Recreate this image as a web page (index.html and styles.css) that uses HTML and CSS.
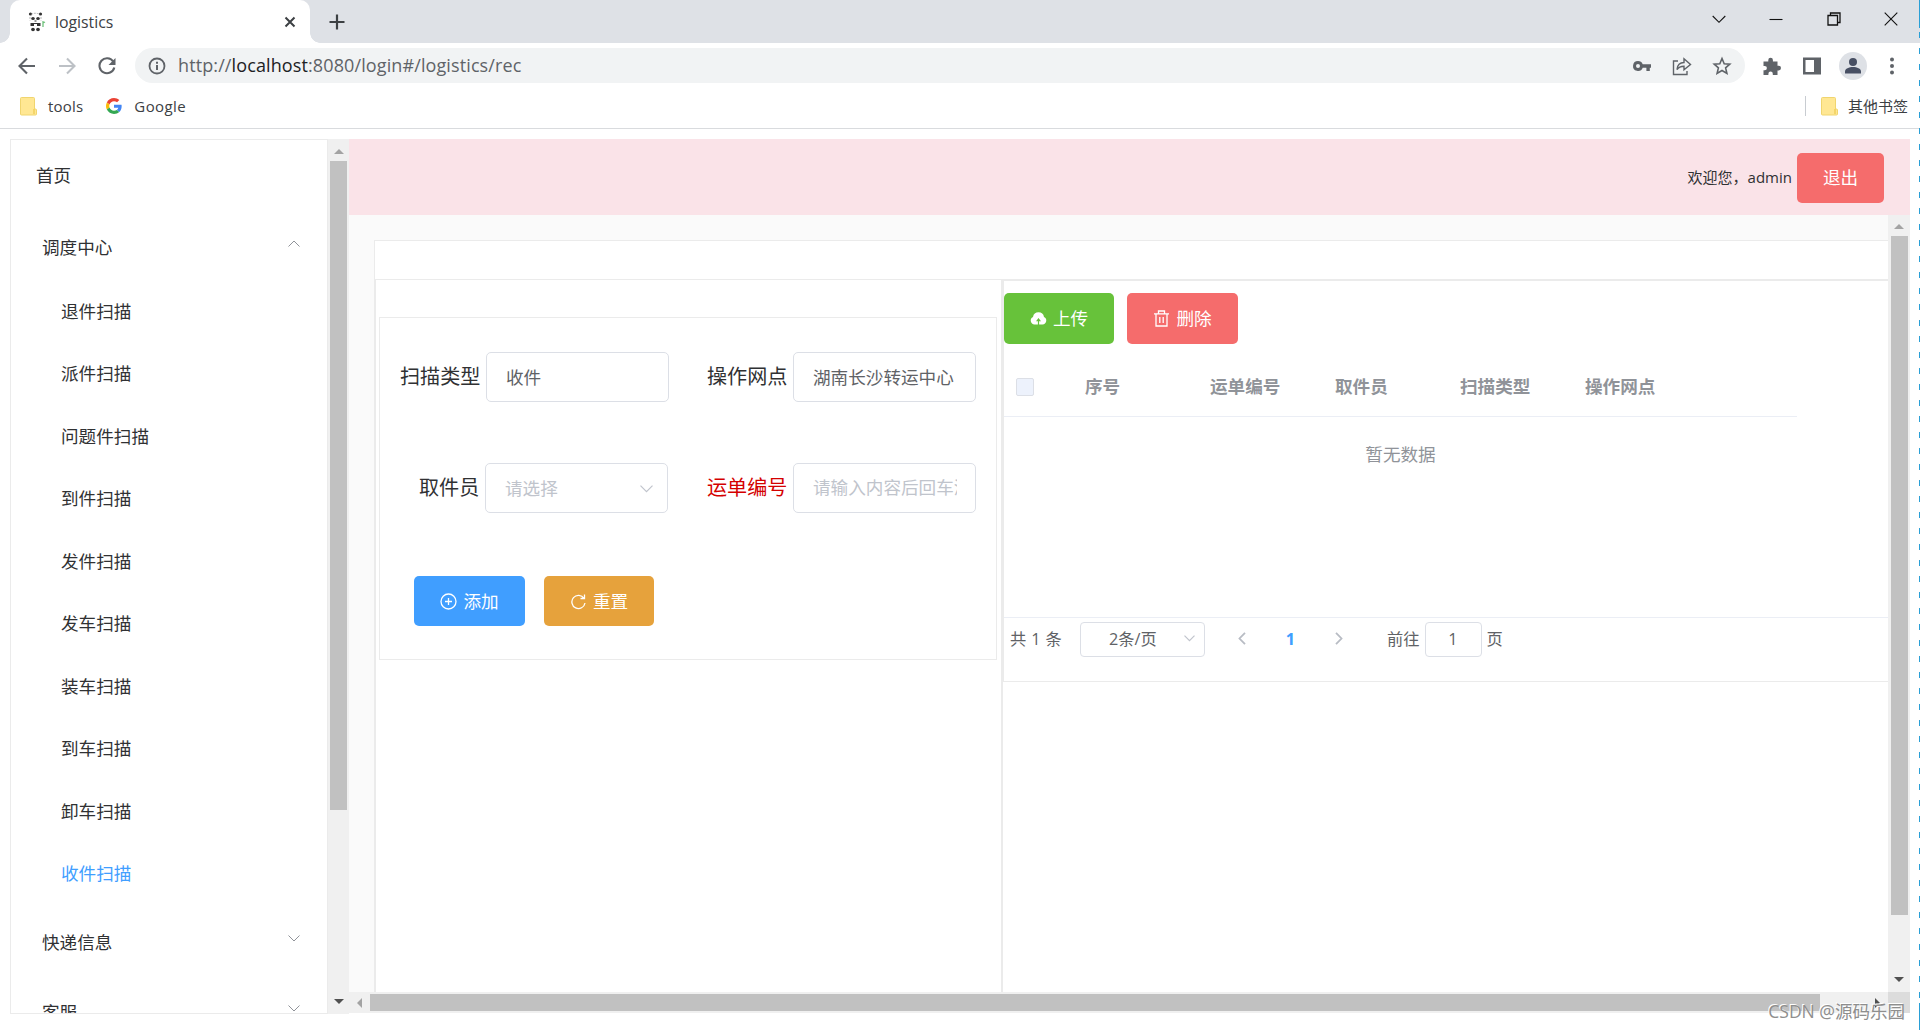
FILE: index.html
```html
<!DOCTYPE html>
<html lang="zh-CN">
  <head>
    <meta charset="UTF-8" />
    <meta name="viewport" content="width=device-width, initial-scale=1.0" />
    <title>logistics</title>
    <link rel="stylesheet" href="styles.css">
  </head>
  <body>
    <!-- Tab strip -->
    <div class="tabs">
      <div class="tab">
        <svg class="favicon" width="18" height="20" viewBox="0 0 18 20">
          <g fill="#333">
            <circle cx="2.5" cy="2" r="1.6" />
            <circle cx="12.5" cy="2" r="1.6" />
            <ellipse cx="5" cy="6.5" rx="1.8" ry="1.5" />
            <ellipse cx="10" cy="6.5" rx="1.8" ry="1.5" />
            <rect x="6.5" y="8.5" width="2" height="1" />
            <rect x="2.5" y="11" width="3.5" height="3" />
            <rect x="9" y="11" width="3.5" height="3" />
            <rect x="6" y="11" width="3" height="1" />
            <ellipse cx="5" cy="17.5" rx="1.9" ry="1.8" />
            <ellipse cx="10" cy="17.5" rx="1.9" ry="1.8" />
          </g>
          <path d="M3 2.5Q7.500 0 12 2.500M2 5V8.500M13 5V8.500" stroke="#999" stroke-width=".7" fill="none" stroke-dasharray="2 1" />
          <path d="M15 9v6M15 11l2-1" stroke="#6fc27c" stroke-width="1.3" fill="none" />
        </svg>
        <span class="tab-title">logistics</span>
        <svg class="tab-close" width="12" height="12" viewBox="0 0 12 12"><path d="M1.500 1.500l9 9M10.500 1.500l-9 9" stroke="#3c4043" stroke-width="2" /></svg>
      </div>
      <svg class="tab-add" width="16" height="16" viewBox="0 0 16 16"><path d="M8 .5v15M.5 8h15" stroke="#3c4043" stroke-width="2.200" /></svg>
      <div class="window-buttons">
        <svg width="14" height="14" viewBox="0 0 14 14"><path d="M.7 4l6.300 6.300L13.300 4" /></svg>
        <svg width="14" height="14" viewBox="0 0 14 14"><path d="M.5 7.500h13" /></svg>
        <svg width="14" height="14" viewBox="0 0 14 14"><path d="M1 3.500h9.500V13H1zM3.500 3.500V1H13v9.500h-2.500" stroke-width="1.300" /></svg>
        <svg width="14" height="14" viewBox="0 0 14 14"><path d="M.7.7l12.600 12.600M13.300.7L.7 13.300" /></svg>
      </div>
    </div>

    <!-- Address bar -->
    <div class="toolbar">
      <div class="nav">
        <svg width="18" height="18" viewBox="0 0 18 18" stroke="#5f6368"><path d="M17 9H2M9 1.500L1.500 9 9 16.500" /></svg>
        <svg width="18" height="18" viewBox="0 0 18 18" stroke="#bdc1c6"><path d="M1 9h15M9 1.500L16.500 9 9 16.500" /></svg>
        <svg width="18" height="18" viewBox="0 0 18 18" stroke="#5f6368"><path d="M15.200 4.500A7.500 7.500 0 1 0 16.300 10.500" /><path d="M17.500 1v7h-7z" fill="#5f6368" stroke="none" /></svg>
      </div>
      <div class="address">
        <svg width="18" height="18" viewBox="0 0 18 18"><circle cx="9" cy="9" r="7.500" fill="none" stroke="#5f6368" stroke-width="1.800" /><path d="M9 8v5M9 4.800v1.900" stroke="#5f6368" stroke-width="2" /></svg>
        <div class="url">http://<b>localhost</b>:8080/login#/logistics/rec</div>
        <div class="address-icons">
          <svg width="20" height="20" viewBox="0 0 20 20"><path fill="#5f6368" fill-rule="evenodd" d="M6 5a5 5 0 0 1 4.700 3.200H19v3.600h-1.200V15h-3.400v-3.200h-3.700A5 5 0 1 1 6 5zm0 3a2 2 0 1 0 0 4 2 2 0 0 0 0-4z" /></svg>
          <svg width="20" height="20" viewBox="0 0 20 20"><path d="M6 5H1.500v13.500H15V15M5 13.500c.5-5 3-7 7-7V2.800l6.500 5.700-6.500 5.300v-3.600c-3.500 0-5.500 1-7 3.300z" fill="none" stroke="#5f6368" stroke-width="1.400" /></svg>
          <svg width="20" height="20" viewBox="0 0 20 20"><path d="M10 2.500l2.200 5.200 5.600.5-4.200 3.700 1.300 5.500L10 14.500l-4.900 2.900 1.300-5.500-4.200-3.700 5.600-.5z" fill="none" stroke="#5f6368" stroke-width="1.600" /></svg>
        </div>
      </div>
      <div class="extensions">
        <svg width="20" height="20" viewBox="0 0 20 20"><path fill="#5f6368" d="M1.500 5.500h4.800V4a2.300 2.300 0 0 1 4.600 0v1.500h4.600v4.300h1.200a2.300 2.300 0 0 1 0 4.600h-1.200V19h-4.700v-1.300a2.200 2.200 0 0 0-4.400 0V19H1.500v-4.700h1.200a2.200 2.200 0 0 0 0-4.400H1.500z" /></svg>
        <svg width="20" height="20" viewBox="0 0 20 20"><path fill="#5f6368" fill-rule="evenodd" d="M1 1.500h18v17H1zM3.500 4v12H12V4z" /></svg>
        <svg width="28" height="28" viewBox="0 0 28 28"><circle cx="14" cy="14" r="14" fill="#dee1e6" /><circle cx="14" cy="10" r="4" fill="#474f63" /><path fill="#474f63" d="M6 21.500v-2c0-3 4-4.500 8-4.500s8 1.500 8 4.500v2z" /></svg>
        <svg class="dots" width="6" height="20" viewBox="0 0 6 20" fill="#5f6368"><circle cx="3" cy="3.500" r="2" /><circle cx="3" cy="10" r="2" /><circle cx="3" cy="16.500" r="2" /></svg>
      </div>
    </div>

    <!-- Bookmarks -->
    <div class="bookmarks">
      <svg class="folder" width="17" height="19" viewBox="0 0 17 19"><path d="M1.500.5h12a1 1 0 0 1 1 1V12h1a1 1 0 0 1 1 1v4a1 1 0 0 1-1 1h-14a1 1 0 0 1-1-1V1.500a1 1 0 0 1 1-1z" fill="#ffe793" stroke="#f0d56f" /><path d="M14 12v5" stroke="#e9c340" /></svg>
      <span class="bookmark-tools">tools</span>
      <svg class="google" width="16" height="16" viewBox="0 0 48 48">
        <path fill="#EA4335" d="M24 9.500c3.540 0 6.710 1.220 9.210 3.600l6.850-6.850C35.900 2.380 30.470 0 24 0 14.620 0 6.510 5.380 2.560 13.220l7.980 6.190C12.430 13.720 17.740 9.500 24 9.500z" />
        <path fill="#4285F4" d="M46.980 24.550c0-1.570-.15-3.090-.38-4.550H24v9.020h12.940c-.58 2.960-2.260 5.480-4.780 7.180l7.730 6c4.510-4.180 7.090-10.360 7.090-17.650z" />
        <path fill="#FBBC05" d="M10.530 28.590c-.48-1.450-.76-2.990-.76-4.590s.27-3.140.76-4.590l-7.980-6.190C.92 16.460 0 20.120 0 24c0 3.880.92 7.540 2.560 10.780l7.970-6.190z" />
        <path fill="#34A853" d="M24 48c6.480 0 11.930-2.130 15.890-5.810l-7.730-6c-2.150 1.450-4.920 2.300-8.160 2.300-6.260 0-11.570-4.220-13.470-9.910l-7.980 6.190C6.510 42.620 14.620 48 24 48z" />
      </svg>
      <span class="bookmark-google">Google</span>
      <div class="other-bookmarks">
        <svg class="folder" width="17" height="19" viewBox="0 0 17 19"><path d="M1.500.5h12a1 1 0 0 1 1 1V12h1a1 1 0 0 1 1 1v4a1 1 0 0 1-1 1h-14a1 1 0 0 1-1-1V1.500a1 1 0 0 1 1-1z" fill="#ffe793" stroke="#f0d56f" /><path d="M14 12v5" stroke="#e9c340" /></svg>
        <span>其他书签</span>
      </div>
    </div>

    <div class="app">
      <div class="aside">
        <ul class="menu">
          <li class="home">首页</li>
          <li class="submenu">调度中心
            <svg class="arrow" width="12" height="7" viewBox="0 0 12 7"><path d="M.5 6.500L6 1l5.500 5.500" /></svg>
          </li>
          <li class="item">退件扫描</li>
          <li class="item">派件扫描</li>
          <li class="item">问题件扫描</li>
          <li class="item">到件扫描</li>
          <li class="item">发件扫描</li>
          <li class="item">发车扫描</li>
          <li class="item">装车扫描</li>
          <li class="item">到车扫描</li>
          <li class="item">卸车扫描</li>
          <li class="item active">收件扫描</li>
          <li class="submenu">快递信息
            <svg class="arrow" width="12" height="7" viewBox="0 0 12 7"><path d="M.5.5L6 6 11.500.5" /></svg>
          </li>
          <li class="submenu">客服
            <svg class="arrow" width="12" height="7" viewBox="0 0 12 7"><path d="M.5.5L6 6 11.500.5" /></svg>
          </li>
        </ul>
      </div>
      <div class="scroll-y">
        <i class="up"></i>
        <div class="thumb thumb-aside"></div>
        <i class="down"></i>
      </div>

      <div class="container">
        <div class="header">
          <span>欢迎您，admin</span>
          <button class="btn danger logout">退出</button>
        </div>
        <div class="body">
          <div class="main">
            <div class="card">
              <div class="columns">
                <div class="left">
                  <form class="scan-form">
                    <div class="row">
                      <label class="first">扫描类型</label>
                      <input type="text" value="收件" readonly />
                      <label class="second">操作网点</label>
                      <input type="text" value="湖南长沙转运中心" readonly />
                    </div>
                    <div class="row">
                      <label class="first picker">取件员</label>
                      <div class="select">
                        请选择
                        <svg width="13" height="8" viewBox="0 0 13 8"><path d="M.5.7l6 6 6-6" /></svg>
                      </div>
                      <label class="second required">运单编号</label>
                      <input type="text" placeholder="请输入内容后回车添加" />
                    </div>
                    <div class="actions">
                      <button type="button" class="btn primary">
                        <svg width="17" height="17" viewBox="0 0 17 17"><circle cx="8.500" cy="8.500" r="7.500" /><path d="M8.500 5v7M5 8.500h7" /></svg><span>添加</span>
                      </button>
                      <button type="button" class="btn warning">
                        <svg width="17" height="17" viewBox="0 0 17 17"><path d="M14 5.300A6.600 6.600 0 1 0 15 10M14.500 1.500v4h-4" /></svg><span>重置</span>
                      </button>
                    </div>
                  </form>
                </div>
                <div class="right">
                  <div class="panel">
                    <div class="table-actions">
                      <button class="btn success">
                        <svg width="17" height="17" viewBox="0 0 17 17"><path fill="#fff" stroke="none" d="M4.500 14.500A4 4 0 0 1 3 6.900a5.600 5.600 0 0 1 11 0 4 4 0 0 1-1.500 7.600H9.100v-3.300h1.900L8.500 8 6 11.200h1.900v3.300z" /></svg><span>上传</span>
                      </button>
                      <button class="btn danger">
                        <svg width="17" height="17" viewBox="0 0 17 17"><path d="M1 3.800h15M5.500 3.500V1h6v2.500M3 4v12h11V4M6.800 7v6M10.200 7v6" /></svg><span>删除</span>
                      </button>
                    </div>
                    <table>
                      <thead>
                        <tr>
                          <th class="check"><span class="checkbox"></span></th>
                          <th>序号</th>
                          <th>运单编号</th>
                          <th>取件员</th>
                          <th>扫描类型</th>
                          <th class="last">操作网点</th>
                        </tr>
                      </thead>
                      <tbody>
                        <tr>
                          <td colspan="6">暂无数据</td>
                        </tr>
                      </tbody>
                    </table>
                    <div class="pagination">
                      <span class="total">共 1 条</span>
                      <div class="page-size">2条/页
                        <svg width="11" height="7" viewBox="0 0 11 7"><path d="M.5.7l5 5 5-5" /></svg>
                      </div>
                      <div class="pager">
                        <svg width="8" height="13" viewBox="0 0 8 13"><path d="M7 .8L1.500 6.500 7 12.200" /></svg>
                        <b>1</b>
                        <svg width="8" height="13" viewBox="0 0 8 13"><path d="M1 .8l5.500 5.700L1 12.200" /></svg>
                      </div>
                      <span>前往</span>
                      <div class="jump">1</div>
                      <span>页</span>
                    </div>
                  </div>
                </div>
              </div>
            </div>
          </div>
          <div class="scroll-y">
            <i class="up"></i>
            <div class="thumb thumb-main"></div>
            <i class="down"></i>
          </div>
        </div>
        <div class="scroll-x">
          <i class="prev"></i>
          <div class="thumb"></div>
          <i class="next"></i>
          <div class="corner"></div>
        </div>
      </div>
    </div>

    <div class="edge"></div>
    <div class="watermark">CSDN @源码乐园</div>
  </body>
</html>
```
FILE: styles.css
```css
* {
  box-sizing: border-box;
}
body {
  margin: 0;
  height: 1030px;
  overflow: hidden;
  position: relative;
  display: flex;
  flex-direction: column;
  background-color: #fff;
  color: #303133;
  font-family: "Open Sans", "Noto Sans CJK SC", sans-serif;
  font-size: 17.6px;
}
svg {
  display: block;
  flex: none;
}

/* Browser frame */
.tabs {
  height: 43px;
  flex: none;
  display: flex;
  align-items: center;
  background-color: #dee1e6;
}
.tab {
  position: relative;
  width: 300px;
  height: 43px;
  margin-left: 10px;
  padding: 0 14px 0 18px;
  display: flex;
  align-items: center;
  background-color: #fff;
  border-radius: 10px 10px 0 0;
}
.tab::before,
.tab::after {
  content: "";
  position: absolute;
  bottom: 0;
  width: 10px;
  height: 10px;
}
.tab::before {
  left: -10px;
  background: radial-gradient(circle at 0 0, #dee1e6 9.5px, #fff 10px);
}
.tab::after {
  right: -10px;
  background: radial-gradient(circle at 100% 0, #dee1e6 9.5px, #fff 10px);
}
.tab-title {
  margin-left: 9px;
  font-size: 15.8px;
  color: #3c4043;
  padding-top: 1px;
}
.tab-close {
  margin-left: auto;
}
.tab-add {
  margin-left: 19px;
}
.window-buttons {
  margin-left: auto;
  padding-right: 22px;
  display: flex;
  gap: 43.5px;
  padding-bottom: 6px;
}
.window-buttons svg {
  fill: none;
  stroke: #111;
  stroke-width: 1.1;
}
.toolbar {
  height: 45px;
  flex: none;
  display: flex;
  align-items: center;
}
.nav {
  width: 135px;
  padding-left: 18px;
  display: flex;
  gap: 22px;
}
.nav svg {
  fill: none;
  stroke-width: 2.1;
}
.address {
  width: 1610px;
  height: 35px;
  padding: 0 13px 0 13px;
  display: flex;
  align-items: center;
  background-color: #f1f3f4;
  border-radius: 18px;
}
.url {
  margin-left: 12px;
  padding-bottom: 2px;
  font-size: 18px;
  letter-spacing: 0.11px;
  color: #5f6368;
}
.url b {
  font-weight: normal;
  color: #202124;
}
.address-icons {
  margin-left: auto;
  display: flex;
  gap: 20px;
}
.extensions {
  margin-left: 17px;
  display: flex;
  align-items: center;
  gap: 20px;
}
.extensions svg:nth-child(3) {
  margin-left: -3px;
}
.dots {
  margin-left: 2px;
}
.bookmarks {
  height: 41px;
  flex: none;
  display: flex;
  align-items: center;
  padding: 0 12px 4px 20px;
  font-size: 15px;
  color: #3c4043;
  border-bottom: 1px solid #d9dbde;
}
.bookmark-tools {
  margin-left: 11px;
  letter-spacing: 0.2px;
}
.bookmark-google {
  letter-spacing: 0.4px;
}
.google {
  margin: 0 12px 0 23px;
}
.other-bookmarks {
  margin-left: auto;
  height: 20px;
  padding-left: 15px;
  display: flex;
  align-items: center;
  gap: 10px;
  border-left: 1px solid #c8ccd1;
}
.other-bookmarks span {
  padding-bottom: 2px;
}

/* Page */
.app {
  width: 1900px;
  height: 875px;
  margin: 10px 0 0 10px;
  flex: none;
  display: flex;
}
.aside {
  width: 318px;
  height: 875px;
  overflow: hidden;
  border: 1px solid #ebebeb;
}
.menu {
  margin: 0;
  padding: 0;
  list-style: none;
}
.menu li {
  height: 62.5px;
  display: flex;
  align-items: center;
}
.menu .home {
  height: 70px;
  padding: 0 0 2px 25px;
}
.menu .submenu {
  height: 70px;
  padding: 2px 0 0 31px;
}
.menu .item {
  padding: 0 0 2px 50px;
}
.menu .active {
  color: #409eff;
}
.arrow {
  margin: -6px 27px 0 auto;
  fill: none;
  stroke: #909399;
}
.scroll-y {
  width: 21px;
  flex: none;
  display: flex;
  flex-direction: column;
  align-items: center;
  background-color: #f0f0f0;
}
.thumb {
  width: 17px;
  background-color: #c1c1c1;
}
.thumb-aside {
  height: 649px;
}
.thumb-main {
  height: 679px;
}
.up {
  margin: 10px 0 7px;
  border: 5px solid transparent;
  border-top: 0;
  border-bottom-color: #a3a3a3;
}
.down {
  margin: auto 0 10px;
  border: 5px solid transparent;
  border-bottom: 0;
  border-top-color: #505050;
}
.container {
  width: 1561px;
  display: flex;
  flex-direction: column;
}
.header {
  height: 76px;
  flex: none;
  display: flex;
  align-items: center;
  justify-content: flex-end;
  gap: 5px;
  padding: 2px 26px 0 0;
  background-color: #fae3e8;
  font-size: 15px;
}
.header span {
  padding-bottom: 3px;
}
.body {
  height: 777px;
  display: flex;
}
.main {
  width: 1539px;
  padding: 25px 0 0 25px;
  background-color: #fafafa;
  overflow: hidden;
}
.body .scroll-y {
  width: 22px;
}
.body .up {
  margin-top: 9px;
}
.card {
  height: 760px;
  padding-top: 38px;
  background-color: #fff;
  border: 1px solid #ebebeb;
  border-right: 0;
}
.columns {
  height: 720px;
  display: flex;
}
.left {
  width: 627px;
  border: 1px solid #ebebeb;
  border-bottom: 0;
  padding: 37px 0 0 3px;
}
.scan-form {
  width: 618px;
  height: 343px;
  padding-top: 34px;
  border: 1px solid #ebebeb;
}
.row {
  height: 50px;
  margin-bottom: 61px;
  display: flex;
  align-items: center;
}
label {
  padding-bottom: 3px;
  font-size: 20.1px;
  white-space: nowrap;
}
label.first {
  width: 106px;
  padding-left: 20px;
}
label.picker {
  width: 105px;
  padding-left: 39px;
}
label.second {
  width: 124px;
  padding-left: 38px;
}
.picker + .select + label.second {
  width: 125px;
  padding-left: 39px;
}
.required {
  color: #d40000;
}
.row input,
.select {
  width: 183px;
  height: 50px;
  padding: 0 18px 2px 19px;
  border: 1px solid #dcdfe6;
  border-radius: 5px;
  background-color: #fff;
  color: #606266;
  font-family: inherit;
  font-size: 17.6px;
}
.row input::placeholder {
  color: #c0c4cc;
}
.select {
  display: flex;
  align-items: center;
  justify-content: space-between;
  padding-right: 14px;
  color: #c0c4cc;
}
.select svg,
.page-size svg {
  fill: none;
  stroke: #c0c4cc;
  stroke-width: 1.2;
}
.select svg {
  margin-top: 3px;
}
.actions {
  display: flex;
  gap: 19px;
  margin: 2px 0 0 34px;
  padding-top: 2px;
}
.btn {
  height: 50px;
  width: 111px;
  padding: 0;
  display: flex;
  align-items: center;
  justify-content: center;
  gap: 6px;
  border: none;
  border-radius: 5px;
  color: #fff;
  font-family: inherit;
  font-size: 17.6px;
}
.btn span {
  padding-bottom: 2px;
}
.btn svg {
  fill: none;
  stroke: #fff;
  stroke-width: 1.3;
}
.logout {
  width: 87px;
  padding-bottom: 3px;
}
.primary {
  background-color: #409eff;
}
.warning {
  background-color: #e6a23c;
  width: 110px;
}
.success {
  background-color: #67c23a;
  width: 110px;
}
.danger {
  background-color: #f56c6c;
}
.right {
  flex: 1;
  border-left: 1px solid #ebebeb;
  border-top: 1px solid #ebebeb;
}
.panel {
  height: 402px;
  border: 1px solid #ebebeb;
  border-right: 0;
}
.table-actions {
  display: flex;
  gap: 13px;
  padding-top: 12px;
}
.table-actions .btn {
  height: 51px;
}
.table-actions .btn span {
  padding-bottom: 3px;
}
table {
  width: 793px;
  margin-top: 14px;
  border-collapse: collapse;
  color: #909399;
}
th {
  width: 125px;
  height: 58px;
  padding: 0 0 2px;
  text-align: left;
  border-bottom: 1px solid #ebeef5;
}
th.check {
  width: 81px;
  padding: 0 0 0 12px;
}
th.last {
  width: auto;
}
.checkbox {
  display: block;
  width: 18px;
  height: 18px;
  background-color: #edf2fc;
  border: 1px solid #dcdfe6;
  border-radius: 2px;
}
td {
  height: 76px;
  padding: 0 0 2px;
  text-align: center;
}
.pagination {
  margin-top: 125px;
  height: 40px;
  padding: 3px 0 0 6px;
  display: flex;
  align-items: center;
  border-top: 1px solid #ebeef5;
  font-size: 16.25px;
  color: #606266;
}
.pagination > span {
  padding-bottom: 2px;
}
.total {
  width: 70px;
  letter-spacing: 0.4px;
}
.page-size {
  width: 125px;
  height: 35px;
  padding: 0 9px 2px 28px;
  display: flex;
  align-items: center;
  justify-content: space-between;
  border: 1px solid #dcdfe6;
  border-radius: 4px;
}
.pager {
  width: 105px;
  margin: 0 44px 0 33px;
  padding-bottom: 1px;
  display: flex;
  align-items: center;
  justify-content: space-between;
  color: #409eff;
}
.pager svg {
  fill: none;
  stroke: #b8bcc4;
  stroke-width: 1.8;
}
.jump {
  width: 57px;
  height: 35px;
  margin: 0 5px;
  line-height: 33px;
  text-align: center;
  border: 1px solid #dcdfe6;
  border-radius: 4px;
}
.scroll-x {
  height: 21px;
  display: flex;
  align-items: center;
  background-color: #f0f0f0;
}
.scroll-x .thumb {
  width: 1450px;
  height: 17px;
}
.prev {
  margin: 0 8px;
  border: 5px solid transparent;
  border-left: 0;
  border-right-color: #a3a3a3;
}
.next {
  margin: 0 8px 0 auto;
  border: 5px solid transparent;
  border-right: 0;
  border-left-color: #505050;
}
.corner {
  width: 22px;
  height: 21px;
  background-color: #dcdcdc;
}

/* Dashed line along the right side of the window */
.edge {
  position: absolute;
  top: 0;
  right: 0;
  width: 1px;
  height: 1030px;
  background:
    linear-gradient(#2a9fd6, #2a9fd6) 0 0 / 1px 28px no-repeat,
    linear-gradient(#2a9fd6, #2a9fd6) 0 100% / 1px 27px no-repeat,
    repeating-linear-gradient(#2a9fd6 0 6px, transparent 6px 16px);
}
.watermark {
  position: absolute;
  right: 15px;
  bottom: 7px;
  font-size: 17.5px;
  color: #8e8e8e;
  text-shadow: -1px -1px 0 #fff;
}
```
